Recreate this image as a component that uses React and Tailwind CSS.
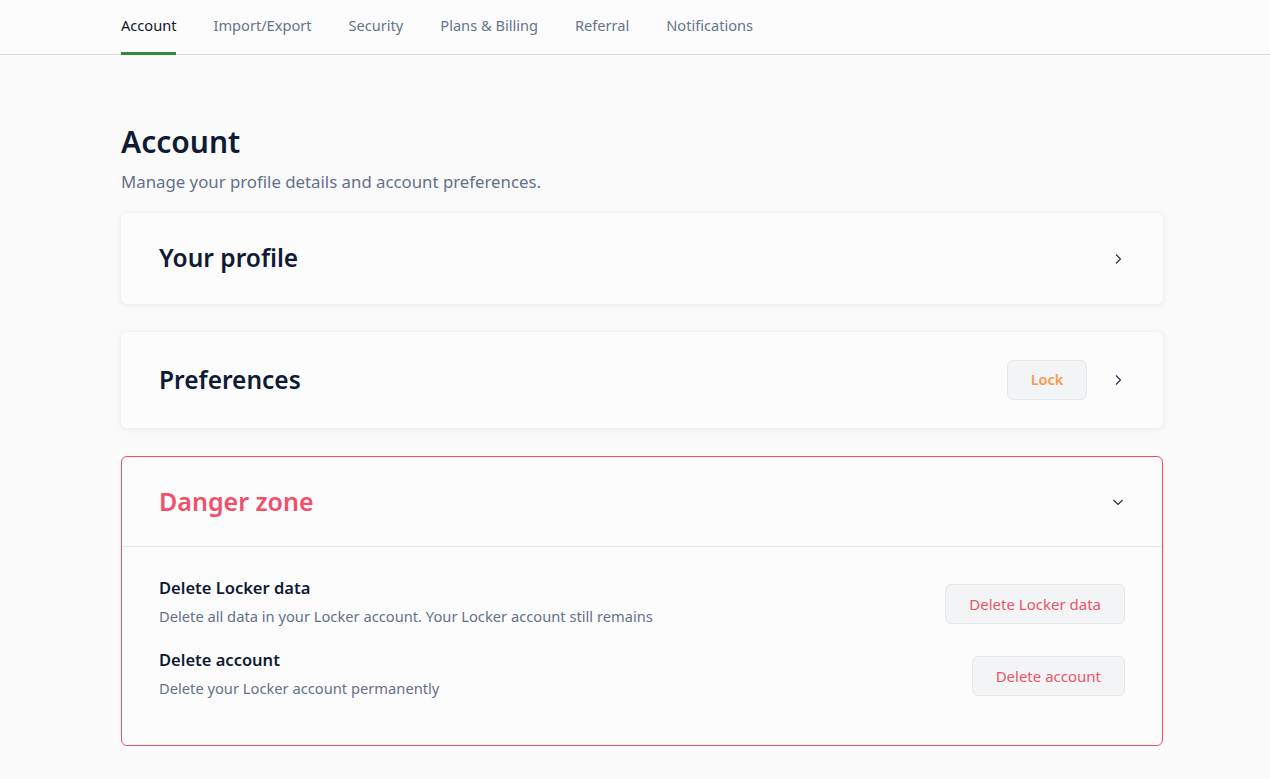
import React from "react";

const tabs = ["Account", "Import/Export", "Security", "Plans & Billing", "Referral", "Notifications"];

function Chevron({ down }) {
  return (
    <svg width="14" height="14" viewBox="0 0 14 14" fill="none" stroke="#1e293b" strokeWidth="1.1">
      {down ? <path d="M2.5 5l4.5 4.5L11.5 5" /> : <path d="M5 2.5l4.5 4.5L5 11.5" />}
    </svg>
  );
}

function DangerRow({ title, desc, action }) {
  return (
    <div className="flex items-start justify-between">
      <div>
        <p className="text-[16.5px] font-semibold text-[#0f1b35] leading-6">{title}</p>
        <p className="text-[14.7px] text-[#64708a] mt-[6px] leading-5">{desc}</p>
      </div>
      <button className="mt-2 h-10 px-[23px] rounded-md border border-[#e3e6ea] bg-[#f3f4f6] text-[15px] text-[#eb5468]">
        {action}
      </button>
    </div>
  );
}

export default function App() {
  return (
    <div className="min-h-screen bg-[#fafafb]" style={{ fontFamily: '"Noto Sans", "Open Sans", sans-serif' }}>
      {/* Tabs */}
      <div className="border-b border-[#d8dde5] bg-[#fcfcfd]">
        <div className="flex gap-[37px] px-[121px] h-[54px]">
          {tabs.map((t, i) => (
            <div
              key={t}
              className={`flex items-center text-[14.6px] border-b-[3px] mb-[-1px] ${
                i === 0 ? "border-[#2e8b3e] text-[#111827]" : "border-transparent text-[#66738d]"
              }`}
            >
              {t}
            </div>
          ))}
        </div>
      </div>

      <div className="px-[121px] pr-[107px] pt-[69px]">
        <h1 className="text-[30px] font-semibold text-[#0f1b35] leading-9">Account</h1>
        <p className="text-[16.8px] text-[#64708a] mt-[9px]">Manage your profile details and account preferences.</p>

        <div className="mt-[19px] flex flex-col gap-7">
          <div className="h-[91px] rounded-md bg-[#fcfcfd] shadow-[0_1px_6px_rgba(15,23,42,0.08)] flex items-center justify-between pl-[38px] pr-[38px]">
            <h2 className="text-[24.5px] font-semibold text-[#0f1b35]">Your profile</h2>
            <Chevron />
          </div>

          <div className="h-[96px] rounded-md bg-[#fcfcfd] shadow-[0_1px_6px_rgba(15,23,42,0.08)] flex items-center justify-between pl-[38px] pr-[38px]">
            <h2 className="text-[24.5px] font-semibold text-[#0f1b35]">Preferences</h2>
            <div className="flex items-center gap-[24px]">
              <button className="h-10 w-20 rounded-md border border-[#e3e6ea] bg-[#f3f4f6] text-[14.5px] font-semibold text-[#f59b4c]">
                Lock
              </button>
              <Chevron />
            </div>
          </div>

          <div className="rounded-md border border-[#ee4f5c] bg-[#fcfcfd]">
            <div className="h-[90px] flex items-center justify-between pl-[37px] pr-[37px] border-b border-[#e5e7eb]">
              <h2 className="text-[25px] font-semibold text-[#f0506a]">Danger zone</h2>
              <Chevron down />
            </div>
            <div className="pl-[37px] pr-[37px] pt-[29px] pb-[47px] flex flex-col gap-[22px]">
              <DangerRow
                title="Delete Locker data"
                desc="Delete all data in your Locker account. Your Locker account still remains"
                action="Delete Locker data"
              />
              <DangerRow title="Delete account" desc="Delete your Locker account permanently" action="Delete account" />
            </div>
          </div>
        </div>
      </div>
    </div>
  );
}
